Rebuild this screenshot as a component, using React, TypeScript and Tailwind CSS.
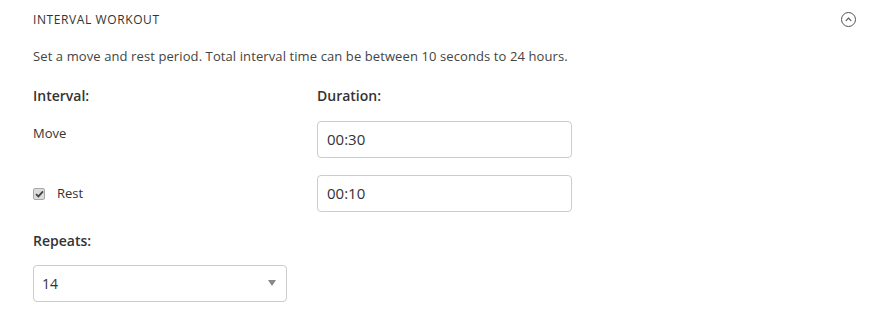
const font = { fontFamily: '"Open Sans", "Liberation Sans", sans-serif' };

const TimeInput = ({ value }: { value: string }) => (
  <div className="flex h-[37px] w-[255px] items-center rounded-[4px] border border-[#cccccc] bg-white px-[9px] text-[15px] text-[#333]">
    {value}
  </div>
);

export default function App() {
  return (
    <div className="h-[322px] w-[876px] bg-white text-[#333]" style={font}>
      <div className="flex h-[38px] items-center justify-between pl-[33px] pr-[20px] pt-[1px]">
        <span className="text-[12px] tracking-[0.6px] text-[#333]">INTERVAL WORKOUT</span>
        <span className="flex h-[15px] w-[15px] items-center justify-center rounded-full border border-[#555]">
          <svg width="9" height="9" viewBox="0 0 10 10" fill="none" stroke="#555" strokeWidth="1.3">
            <path d="M2 6.5 L5 3.5 L8 6.5" />
          </svg>
        </span>
      </div>

      <p className="mt-[9px] pl-[33px] text-[13px] tracking-[0.1px] text-[#444]">
        Set a move and rest period. Total interval time can be between 10 seconds to 24 hours.
      </p>

      <div className="mt-[18px] grid grid-cols-[284px_1fr] pl-[33px]">
        <div className="text-[14px] font-semibold text-[#333]">Interval:</div>
        <div className="text-[14px] font-semibold text-[#333]">Duration:</div>

        <div className="mt-[18px] text-[13px]">Move</div>
        <div className="mt-[15px]">
          <TimeInput value="00:30" />
        </div>

        <div className="mt-[19px] flex items-center gap-[12px] self-center">
          <span className="flex h-[12px] w-[12px] items-center justify-center rounded-[2px] border border-[#a8a8a8] bg-[#dcdcdc]">
            <svg width="9" height="8" viewBox="0 0 9 8" fill="none" stroke="#444" strokeWidth="1.8">
              <path d="M1 4.2 L3.4 6.4 L8 1.3" />
            </svg>
          </span>
          <span className="text-[13px]">Rest</span>
        </div>
        <div className="mt-[17px]">
          <TimeInput value="00:10" />
        </div>
      </div>

      <div className="mt-[18px] pl-[33px] text-[14px] font-semibold text-[#333]">Repeats:</div>

      <div className="mt-[14px] pl-[33px]">
        <div className="flex h-[37px] w-[254px] items-center justify-between rounded-[4px] border border-[#cccccc] bg-white pl-[8px] pr-[10px] text-[14px] text-[#333]">
          <span>14</span>
          <svg width="8" height="6" viewBox="0 0 8 6">
            <path d="M0 0 H8 L4 6 Z" fill="#888" />
          </svg>
        </div>
      </div>
    </div>
  );
}
